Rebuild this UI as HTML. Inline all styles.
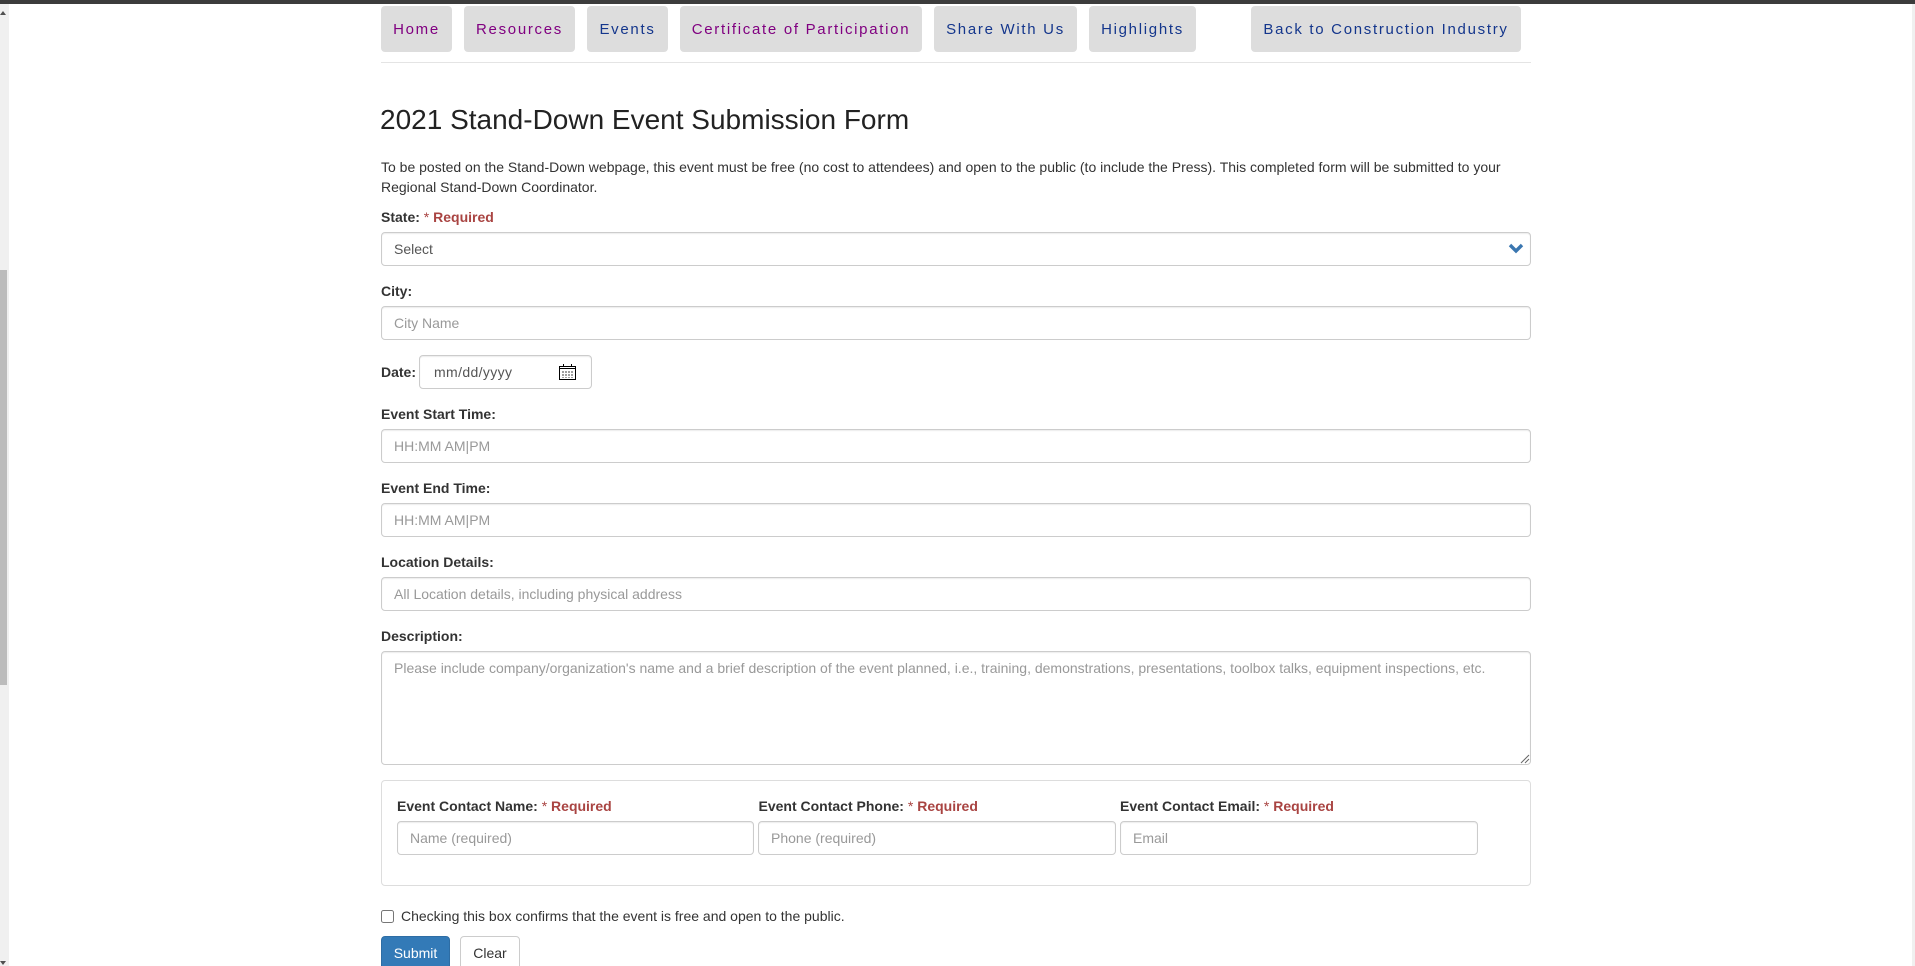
<!DOCTYPE html>
<html lang="en"><head><meta charset="utf-8"><title>2021 Stand-Down Event Submission Form</title>
<style>
html,body{margin:0;padding:0;background:#fff;width:1915px;height:966px;overflow:hidden}
body{position:relative;font-family:"Liberation Sans",Arial,sans-serif;font-size:14px;color:#333}
.a{position:absolute;white-space:nowrap}
.nav{position:absolute;top:6px;height:46px;line-height:47px;background:#ddd;border-radius:4px;text-align:center;font-size:15px;letter-spacing:1.7px;white-space:nowrap}
.v{color:#800080}.b{color:#14368c}
.box{position:absolute;box-sizing:border-box;height:34px;border:1px solid #ccc;border-radius:4px;background:#fff;box-shadow:inset 0 1px 1px rgba(0,0,0,.075);line-height:32px;padding-left:12px;color:#999;white-space:nowrap}
.l{position:absolute;font-weight:700;line-height:20px;white-space:nowrap;letter-spacing:0}
.r{color:#a94442}.s{font-weight:400}
</style></head><body>
<div class="a" style="left:0;top:0;width:1915px;height:4px;background:#3c3c3c"></div>
<div class="a" style="left:0;top:4px;width:9px;height:962px;background:#f0f0f0"></div>
<div class="a" style="left:0;top:270px;width:7px;height:415px;background:#bcbcbc"></div>
<div class="a" style="left:1912px;top:4px;width:3px;height:962px;background:#f0f0f0"></div>
<svg class="a" style="left:0;top:10px" width="8" height="6"><path d="M0 5L3 1L6 5Z" fill="#505050"/></svg>
<svg class="a" style="left:0;top:960px" width="8" height="6"><path d="M0 1H6L3 5Z" fill="#505050"/></svg>

<div class="nav v" style="left:381px;width:71px">Home</div>
<div class="nav v" style="left:464px;width:111px">Resources</div>
<div class="nav b" style="left:587px;width:81px">Events</div>
<div class="nav v" style="left:680px;width:242px">Certificate of Participation</div>
<div class="nav b" style="left:934px;width:143px">Share With Us</div>
<div class="nav b" style="left:1089px;width:107px">Highlights</div>
<div class="nav b" style="left:1251px;width:270px">Back to Construction Industry</div>
<div class="a" style="left:381px;top:62px;width:1150px;height:1px;background:#e4e4e4"></div>

<div class="a" style="left:380px;top:100px;font-size:28px;line-height:40px;color:#222">2021 Stand-Down Event Submission Form</div>
<div class="a" style="left:381px;top:157px;line-height:20px;color:#333">To be posted on the Stand-Down webpage, this event must be free (no cost to attendees) and open to the public (to include the Press). This completed form will be submitted to your<br>Regional Stand-Down Coordinator.</div>

<div class="l" style="left:381px;top:207px">State: <span class="r"><span class="s">*</span> Required</span></div>
<div class="box" style="left:381px;top:232px;width:1150px;color:#555">Select</div>
<svg class="a" style="left:1507px;top:242px" width="18" height="12"><path d="M3 3L9 9L15 3" fill="none" stroke="#3a76b0" stroke-width="3.4"/></svg>

<div class="l" style="left:381px;top:281px">City:</div>
<div class="box" style="left:381px;top:306px;width:1150px">City Name</div>

<div class="l" style="left:381px;top:362px">Date:</div>
<div class="box" style="left:419px;top:355px;width:173px;color:#555;padding-left:14px;letter-spacing:.37px">mm/dd/yyyy</div>
<svg class="a" style="left:559px;top:363px" width="18" height="18"><path d="M.5 3.5H16.5V16.5H.5Z" fill="#fff" stroke="#000"/><path d="M1 5.5H16" stroke="#000"/><path d="M4.5 1V4M12.5 1V4" stroke="#000"/><path d="M4 8V15M7 8V15M10 8V15M13 8V15" stroke="#888" stroke-width="1.6" stroke-dasharray="2 1"/></svg>

<div class="l" style="left:381px;top:404px">Event Start Time:</div>
<div class="box" style="left:381px;top:429px;width:1150px">HH:MM AM|PM</div>
<div class="l" style="left:381px;top:478px">Event End Time:</div>
<div class="box" style="left:381px;top:503px;width:1150px">HH:MM AM|PM</div>
<div class="l" style="left:381px;top:552px">Location Details:</div>
<div class="box" style="left:381px;top:577px;width:1150px">All Location details, including physical address</div>
<div class="l" style="left:381px;top:626px">Description:</div>
<div class="box" style="left:381px;top:651px;width:1150px;height:114px">Please include company/organization's name and a brief description of the event planned, i.e., training, demonstrations, presentations, toolbox talks, equipment inspections, etc.</div>
<svg class="a" style="left:1520px;top:753px" width="10" height="11"><path d="M1 10L9 2M5 10L9 6" stroke="#666" stroke-width="1"/></svg>

<div class="a" style="left:381px;top:780px;width:1150px;height:106px;box-sizing:border-box;border:1px solid #ddd;border-radius:4px"></div>
<div class="l" style="left:397px;top:796px">Event Contact Name: <span class="r"><span class="s">*</span> Required</span></div>
<div class="l" style="left:758.5px;top:796px">Event Contact Phone: <span class="r"><span class="s">*</span> Required</span></div>
<div class="l" style="left:1120px;top:796px">Event Contact Email: <span class="r"><span class="s">*</span> Required</span></div>
<div class="box" style="left:397px;top:821px;width:357px">Name (required)</div>
<div class="box" style="left:758px;top:821px;width:358px">Phone (required)</div>
<div class="box" style="left:1120px;top:821px;width:358px">Email</div>

<div class="a" style="left:381px;top:910px;width:13px;height:13px;box-sizing:border-box;border:1px solid #767676;border-radius:2.5px;background:#fff"></div>
<div class="a" style="left:401px;top:906px;line-height:20px">Checking this box confirms that the event is free and open to the public.</div>
<div class="a" style="left:381px;top:936px;width:69px;height:40px;box-sizing:border-box;border:1px solid #2e6da4;border-radius:4px;background:#337ab7;color:#fff;text-align:center;line-height:32px">Submit</div>
<div class="a" style="left:460px;top:936px;width:60px;height:40px;box-sizing:border-box;border:1px solid #ccc;border-radius:4px;background:#fff;color:#333;text-align:center;line-height:32px">Clear</div>
</body></html>
